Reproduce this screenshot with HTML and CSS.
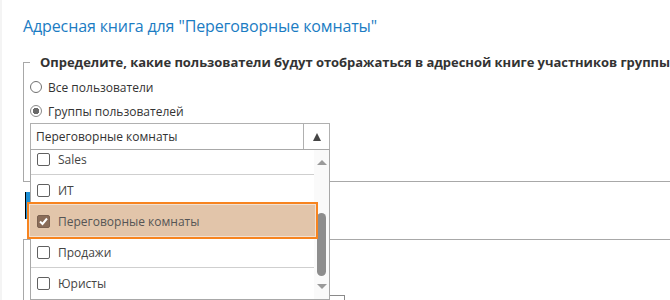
FILE: index.html
```html
<!DOCTYPE html>
<html lang="ru">
<head>
    <meta charset="UTF-8">
    <meta name="viewport" content="width=device-width, initial-scale=1.0">
    <title>Адресная книга</title>
    <link rel="stylesheet" href="styles.css">
</head>
<body>

    <div class="page">
        <h1 class="title">Адресная книга для "Переговорные комнаты"</h1>

        <fieldset class="group">
            <legend class="group-title">Определите, какие пользователи будут отображаться в адресной книге участников группы</legend>
            <label class="option"><span class="radio"></span>Все пользователи</label>
            <label class="option"><span class="radio checked"></span>Группы пользователей</label>

            <div class="combo">
                <div class="combo-field">
                    <span class="combo-value">Переговорные комнаты</span>
                    <span class="combo-toggle"><span class="arrow-up"></span></span>
                </div>
                <div class="combo-list">
                    <div class="combo-items">
                        <div class="item cut"><span class="check"></span>Sales</div>
                        <div class="item"><span class="check"></span>ИТ</div>
                        <div class="item selected">
                            <span class="check checked">
                                <svg width="11" height="11" viewBox="0 0 11 11"><polyline points="2,5.5 4.5,8 9,2.5" fill="none" stroke="#fff" stroke-width="2"/></svg>
                            </span>Переговорные комнаты
                        </div>
                        <div class="item"><span class="check"></span>Продажи</div>
                        <div class="item"><span class="check"></span>Юристы</div>
                    </div>
                    <div class="scrollbar">
                        <span class="scroll-up"></span>
                        <span class="scroll-thumb"></span>
                        <span class="scroll-down"></span>
                    </div>
                </div>
            </div>
        </fieldset>

        <button class="btn-primary" type="button">Сохранить</button>

        <fieldset class="group group-next">
            <input class="text-input" type="text">
        </fieldset>
    </div>

</body>
</html>
```

FILE: styles.css
```css
body {
    margin: 0;
    background-color: #fff;
    font-family: "Open Sans", "Noto Sans", sans-serif;
    color: #333;
    overflow: hidden;
}

.page {
    width: 720px;
    padding-left: 21px;
    border-left: 2px solid #f4f4f4;
}

.title {
    margin: 0;
    padding-top: 14px;
    font-size: 16px;
    line-height: 24px;
    font-weight: 400;
    letter-spacing: -0.12px;
    color: #1b7cc3;
}

.group {
    margin: 16px 0 0;
    padding: 0 0 31px 6px;
    border: 1px solid #a8a8a8;
    min-inline-size: 0;
}

.group-title {
    padding: 0 10px 0 10px;
    font-size: 13px;
    line-height: 16px;
    font-weight: 700;
    letter-spacing: -0.04px;
    color: #333;
    white-space: nowrap;
}

.option {
    display: flex;
    align-items: center;
    gap: 6px;
    height: 24px;
    font-size: 12px;
    color: #333;
}

.option:first-of-type {
    margin-top: 5px;
}

.radio {
    width: 12px;
    height: 12px;
    box-sizing: border-box;
    border: 1px solid #707070;
    border-radius: 50%;
    background: #fff;
}

.radio.checked {
    background: radial-gradient(circle, #6a6a6a 0 3px, #fff 3.5px);
    border-color: #8a8a8a;
}

.combo {
    position: relative;
    width: 300px;
}

.combo-field {
    display: flex;
    height: 27px;
    box-sizing: border-box;
    border: 1px solid #b0b0b0;
    font-size: 12px;
    color: #333;
}

.combo-value {
    flex: 1;
    display: flex;
    align-items: center;
    padding-left: 5px;
}

.combo-toggle {
    width: 26px;
    box-sizing: border-box;
    border-left: 1px solid #b0b0b0;
    display: flex;
    align-items: center;
    justify-content: center;
}

.arrow-up {
    width: 0;
    height: 0;
    border-left: 4px solid transparent;
    border-right: 4px solid transparent;
    border-bottom: 8px solid #454545;
}

.combo-list {
    position: absolute;
    left: 0;
    top: 26px;
    width: 300px;
    height: 151px;
    box-sizing: border-box;
    border: 1px solid #a8a8a8;
    background: #fff;
    display: flex;
    z-index: 2;
}

.combo-items {
    flex: 1;
}

.item {
    display: flex;
    align-items: center;
    gap: 8px;
    height: 31px;
    box-sizing: border-box;
    padding-left: 6px;
    border-bottom: 1px solid #cfcfcf;
    font-size: 12px;
    color: #444;
}

.item.cut {
    height: 25px;
    padding-bottom: 6px;
}

.item:last-child {
    border-bottom: none;
}

.item.selected {
    position: relative;
    z-index: 1;
    color: #555;
}

.item.selected::before {
    content: "";
    position: absolute;
    left: -4px;
    right: -4px;
    top: -4px;
    bottom: -3px;
    border: 2px solid #f7841f;
    box-shadow: inset 0 0 0 1px #f2e1d2;
    background: #e2c5aa;
    z-index: -1;
}

.check {
    width: 13px;
    height: 13px;
    box-sizing: border-box;
    border: 1px solid #606060;
    border-radius: 2px;
    background: #fff;
    display: flex;
    align-items: center;
    justify-content: center;
}

.check.checked {
    background: #8a6c58;
    border-color: #7b6150;
}

.scrollbar {
    width: 15px;
    background: #fafafa;
    display: flex;
    flex-direction: column;
    align-items: center;
    padding-top: 10px;
}

.scroll-up,
.scroll-down {
    width: 0;
    height: 0;
    border-left: 5px solid transparent;
    border-right: 5px solid transparent;
}

.scroll-up {
    border-bottom: 5px solid #9a9a9a;
}

.scroll-down {
    margin-top: 8px;
    border-top: 5px solid #9a9a9a;
}

.scroll-thumb {
    width: 9px;
    height: 63px;
    margin-top: 48px;
    border-radius: 5px;
    background: #8d8d8d;
}

.btn-primary {
    display: block;
    margin: 10px 0 0 2px;
    width: 110px;
    height: 27px;
    border: none;
    box-shadow: inset 1px 0 0 #000;
    background: #1e8fd5;
    color: #fff;
    font-family: inherit;
    font-size: 12px;
}

.group-next {
    margin-top: 20px;
    padding-top: 55px;
    padding-bottom: 20px;
}

.text-input {
    display: block;
    width: 315px;
    height: 24px;
    box-sizing: border-box;
    border: 1px solid #8a8a8a;
    margin: 0;
}
```
